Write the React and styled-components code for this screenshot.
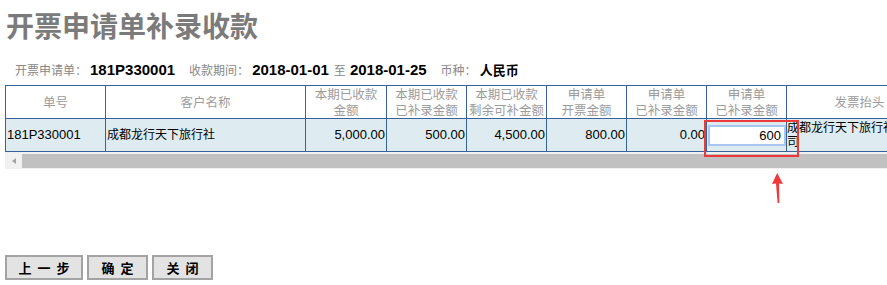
import styled, { createGlobalStyle } from 'styled-components'

const GlobalStyle = createGlobalStyle`
  html, body {
    margin: 0;
    padding: 0;
    overflow: hidden;
    background: #fff;
  }
  body {
    font-family: 'Liberation Sans', 'Noto Sans CJK SC', sans-serif;
  }
`

const columns = [
  { key: 'no', title: ['单号'], width: 100 },
  { key: 'name', title: ['客户名称'], width: 200 },
  { key: 'received', title: ['本期已收款', '金额'], width: 81 },
  { key: 'recorded', title: ['本期已收款', '已补录金额'], width: 80 },
  { key: 'left', title: ['本期已收款', '剩余可补金额'], width: 80 },
  { key: 'invoice', title: ['申请单', '开票金额'], width: 80 },
  { key: 'done', title: ['申请单', '已补录金额'], width: 80 },
  { key: 'input', title: ['申请单', '已补录金额'], width: 80 },
  { key: 'head', title: ['发票抬头'], width: 146 },
]

const App = () => {
  return (
    <Page>
      <GlobalStyle />
      <Title>开票申请单补录收款</Title>
      <Info>
        <Label>开票申请单：</Label>
        <Value>181P330001</Value>
        <Label $gap>收款期间：</Label>
        <Value>2018-01-01</Value>
        <Label $plain>至</Label>
        <Value>2018-01-25</Value>
        <Label $gap>币种：</Label>
        <Value $cjk>人民币</Value>
      </Info>

      <Grid>
        <colgroup>
          {columns.map((c) => (
            <col key={c.key} style={{ width: c.width }} />
          ))}
        </colgroup>
        <thead>
          <tr>
            {columns.map((c) => (
              <Th key={c.key}>
                {c.title.map((line, i) => (
                  <div key={i}>{line}</div>
                ))}
              </Th>
            ))}
          </tr>
        </thead>
        <tbody>
          <tr>
            <Td>181P330001</Td>
            <Td $cjk>成都龙行天下旅行社</Td>
            <Td $num>5,000.00</Td>
            <Td $num>500.00</Td>
            <Td $num>4,500.00</Td>
            <Td $num>800.00</Td>
            <Td $num>0.00</Td>
            <Td>
              <AmountInput defaultValue='600' />
            </Td>
            <Td $cjk $wrap>成都龙行天下旅行社有限公司</Td>
          </tr>
        </tbody>
      </Grid>

      <ScrollBar>
        <ScrollArrow />
        <ScrollThumb />
      </ScrollBar>

      <Buttons>
        <Button $w={78}>上一步</Button>
        <Button $w={61}>确定</Button>
        <Button $w={61}>关闭</Button>
      </Buttons>

      <Highlight />
      <Arrow width='16' height='32' viewBox='0 0 16 32'>
        <path d='M6.2 1 L1 12 L5 11.5 L6.6 31 L8.4 31 L8 11.5 L12 12 Z' fill='#f03a3a' />
      </Arrow>
    </Page>
  )
}

export default App

const Page = styled.div`
  position: relative;
  width: 1000px;
  padding: 7px 0 0 5px;
  box-sizing: border-box;
`

const Title = styled.h1`
  margin: 0 0 0 1px;
  font-size: 28px;
  line-height: 36px;
  font-weight: bold;
  color: #7b7b7b;
  font-family: 'Noto Sans CJK SC', sans-serif;
`

const Info = styled.div`
  display: flex;
  align-items: baseline;
  margin: 19px 0 7px 10px;
  height: 16px;
  line-height: 16px;
`

const Label = styled.span`
  font-size: 12px;
  color: #888;
  font-weight: normal;
  font-family: 'Noto Sans CJK SC', sans-serif;
  margin-left: ${(p) => (p.$gap ? '14px' : p.$plain ? '5px' : '0')};
  margin-right: ${(p) => (p.$plain ? '4px' : '3px')};
`

const Value = styled.span`
  font-size: ${(p) => (p.$cjk ? '13px' : '15px')};
  font-weight: bold;
  color: #000;
  font-family: 'Liberation Sans', 'Noto Sans CJK SC', sans-serif;
`

const Grid = styled.table`
  border-collapse: collapse;
  table-layout: fixed;
  width: 927px;
  font-size: 12px;
`

const Th = styled.th`
  height: 32px;
  padding: 0;
  border: 1px solid #36639a;
  background: #fff;
  color: #9c9c9c;
  font-weight: normal;
  font-size: 12.5px;
  line-height: 16px;
  text-align: center;
  font-family: 'Noto Sans CJK SC', sans-serif;
`

const Td = styled.td`
  height: 32px;
  padding: 0 1px;
  border: 1px solid #36639a;
  background: #deebf0;
  color: #000;
  font-size: ${(p) => (p.$cjk ? '12px' : '13px')};
  line-height: 14px;
  text-align: ${(p) => (p.$num ? 'right' : 'left')};
  white-space: ${(p) => (p.$wrap ? 'normal' : 'nowrap')};
  font-family: 'Liberation Sans', 'Noto Sans CJK SC', sans-serif;
  ${(p) => p.$wrap && 'padding: 0; word-break: break-all;'}
`

const AmountInput = styled.input`
  display: block;
  box-sizing: border-box;
  width: 78px;
  height: 21px;
  margin: 0;
  padding: 0 3px 0 0;
  border: 2px solid #a9c6f3;
  background: #fff;
  text-align: right;
  font-size: 13px;
  font-family: 'Liberation Sans', sans-serif;
  color: #000;
  outline: none;
`

const ScrollBar = styled.div`
  display: flex;
  align-items: center;
  width: 927px;
  height: 17px;
  background: #f1f1f1;
`

const ScrollArrow = styled.div`
  width: 17px;
  height: 17px;
  display: flex;
  align-items: center;
  justify-content: center;
  &::before {
    content: '';
    border-style: solid;
    border-width: 3.5px 4px 3.5px 0;
    border-color: transparent #a3a3a3 transparent transparent;
  }
`

const ScrollThumb = styled.div`
  flex: 1;
  height: 14px;
  background: #c1c1c1;
`

const Buttons = styled.div`
  display: flex;
  gap: 4px;
  margin-top: 86px;
`

const Button = styled.button`
  width: ${(p) => p.$w}px;
  height: 25px;
  padding: 0 0 0 6px;
  border: 2px solid #a3a3a3;
  background: #e3e3e3;
  color: #000;
  font-size: 13px;
  font-weight: bold;
  letter-spacing: 6px;
  font-family: 'Noto Sans CJK SC', sans-serif;
`

const Highlight = styled.div`
  position: absolute;
  left: 704px;
  top: 120px;
  width: 95px;
  height: 37px;
  box-sizing: border-box;
  border: 2px solid #ec3a3a;
`

const Arrow = styled.svg`
  position: absolute;
  left: 771px;
  top: 172px;
`
